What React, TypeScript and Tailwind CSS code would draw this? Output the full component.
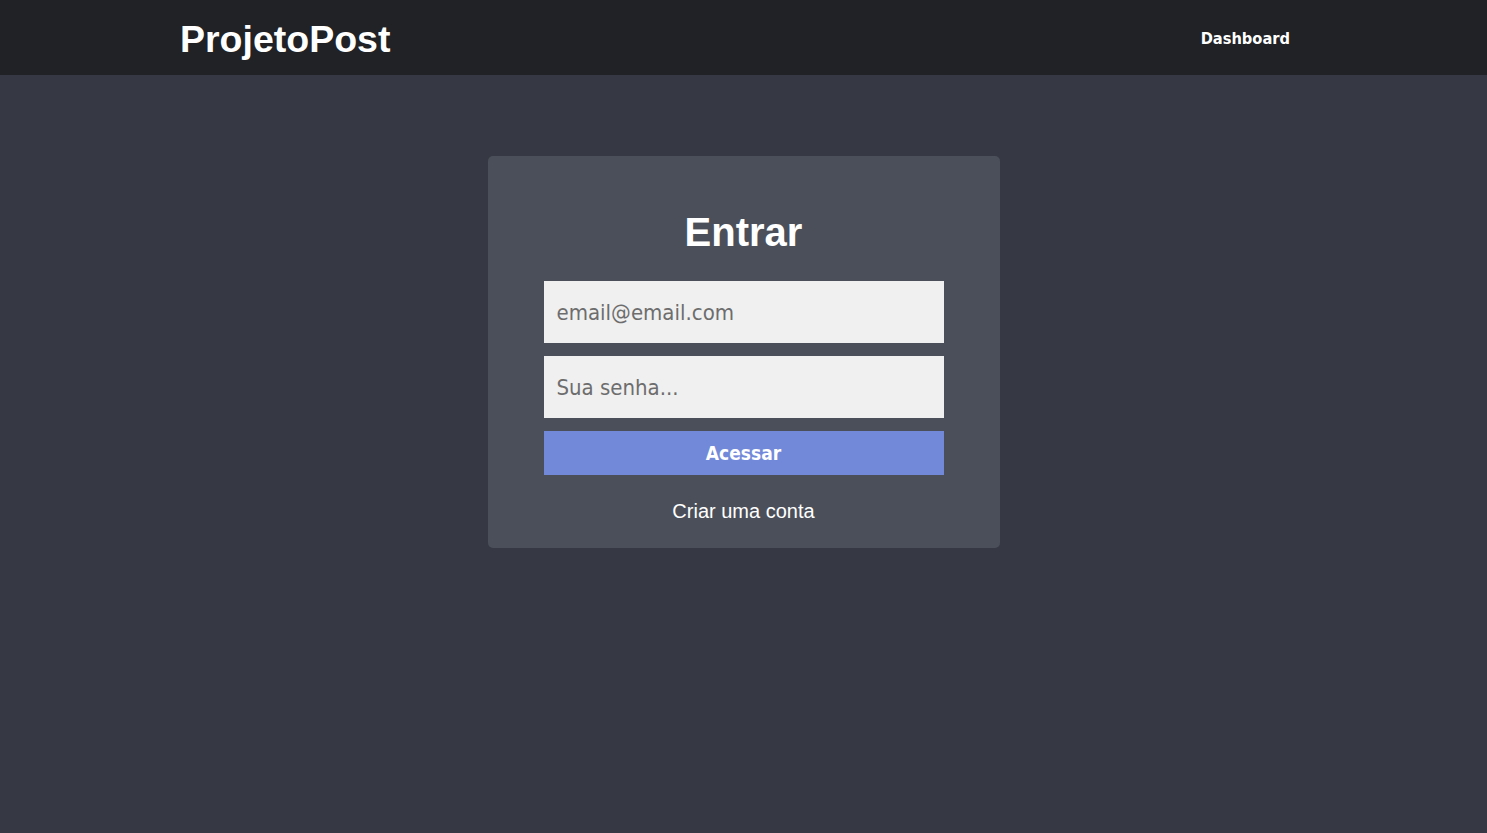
import { useState } from "react";

const tahoma = "font-['DejaVu_Sans_Condensed','DejaVu_Sans',sans-serif]";

function Header() {
  return (
    <header className="h-[75px] bg-[#202225] flex items-center justify-between pt-[4px] pl-[180px] pr-[197px]">
      <a href="#" className="font-['Liberation_Sans',Arial,sans-serif] font-bold text-[37.5px] text-white">
        ProjetoPost
      </a>
      <a href="#" className={`${tahoma} font-bold text-[16.3px] text-white`}>
        Dashboard
      </a>
    </header>
  );
}

export default function App() {
  const [email, setEmail] = useState("");
  const [password, setPassword] = useState("");

  return (
    <div className="min-h-[833px] bg-[#363943]">
      <Header />
      <main className="flex justify-center pt-[81px]">
        <form
          className="w-[512px] bg-[#4b4f59] rounded-[5px] px-[56px] pt-[53px] pb-[25px] flex flex-col"
          onSubmit={(e) => e.preventDefault()}
        >
          <h1 className="font-['Liberation_Sans',Arial,sans-serif] font-bold text-[40px] leading-[46px] text-white text-center mb-[26px]">
            Entrar
          </h1>
          <input
            type="email"
            value={email}
            onChange={(e) => setEmail(e.target.value)}
            placeholder="email@email.com"
            className={`${tahoma} h-[62px] bg-[#f0f0f0] pl-[13px] pr-[12px] text-[22px] text-[#333] placeholder:text-[#6d6d6d] outline-none mb-[13px]`}
          />
          <input
            type="password"
            value={password}
            onChange={(e) => setPassword(e.target.value)}
            placeholder="Sua senha..."
            className={`${tahoma} h-[62px] bg-[#f0f0f0] pl-[13px] pr-[12px] text-[22px] text-[#333] placeholder:text-[#6d6d6d] outline-none mb-[13px]`}
          />
          <button
            type="submit"
            className={`${tahoma} h-[44px] bg-[#7289da] text-white font-bold text-[19px]`}
          >
            Acessar
          </button>
          <a
            href="#"
            className="mt-[25px] text-center font-['Liberation_Sans',Arial,sans-serif] text-[20px] leading-[23px] text-white"
          >
            Criar uma conta
          </a>
        </form>
      </main>
    </div>
  );
}
